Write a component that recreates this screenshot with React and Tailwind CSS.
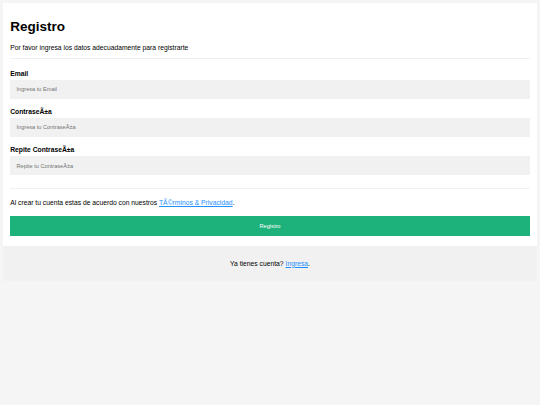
import React from "react";

function Field({ label, placeholder, type = "text" }) {
  return (
    <div className="flex flex-col">
      <label className="text-[6.75px] leading-[7.76px] font-bold text-black">{label}</label>
      <input
        type={type === "password" ? "text" : type}
        placeholder={placeholder}
        readOnly
        className="mt-[2.1px] mb-[9.3px] h-[19.1px] w-full bg-[#f1f1f1] px-[6.33px] text-[5.625px] text-black outline-none placeholder:text-[#757575] border-0"
      />
    </div>
  );
}

export default function App() {
  return (
    <div
      className="min-h-[405px] w-full bg-[#f5f5f5] px-[3.4px] pt-[3.4px] text-black"
      style={{ fontFamily: '"Liberation Sans", Arial, Helvetica, sans-serif' }}
    >
      <div className="flex flex-col">
        <div className="flex flex-col bg-white p-[6.75px]">
          <h1 className="mt-[9px] text-[13.5px] font-bold leading-[15.5px]">Registro</h1>
          <p className="mt-[9px] text-[6.75px] leading-[7.76px]">
            Por favor ingresa los datos adecuadamente para registrarte
          </p>
          <div className="mt-[6.75px] h-[1px] w-full bg-[#f0f0f0]" />
          <div className="mt-[10.5px] flex flex-col">
            <Field label="Email" placeholder="Ingresa tu Email" />
            <Field label="ContraseÃ±a" placeholder="Ingresa tu ContraseÃ±a" />
            <Field label="Repite ContraseÃ±a" placeholder="Repite tu ContraseÃ±a" />
          </div>
          <div className="mt-[3.4px] h-[1px] w-full bg-[#f0f0f0]" />
          <p className="mt-[10.5px] text-[6.75px] leading-[7.76px]">
            Al crear tu cuenta estas de acuerdo con nuestros{" "}
            <a href="#" className="text-[#1e90ff] underline">TÃ©rminos &amp; Privacidad</a>.
          </p>
          <button
            type="button"
            className="mt-[9px] mb-[3.4px] h-[20px] w-full bg-[#1db27c] text-[5.625px] leading-[6.5px] text-white"
          >
            Registro
          </button>
        </div>
        <div className="flex flex-col items-center bg-[#f1f1f1] p-[6.75px]">
          <p className="my-[6.75px] text-[6.75px] leading-[7.76px] text-center">
            Ya tienes cuenta? <a href="#" className="text-[#1e90ff] underline">Ingresa</a>.
          </p>
        </div>
      </div>
    </div>
  );
}
